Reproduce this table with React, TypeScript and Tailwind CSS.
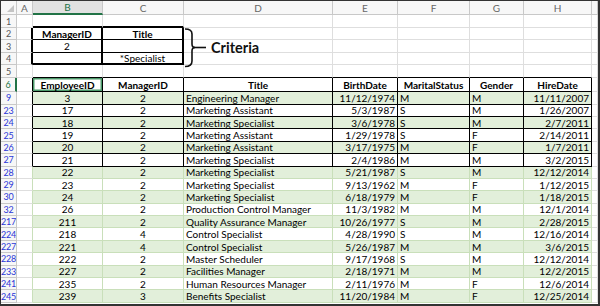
import React from 'react';

// grid template: row header, A..I
const COLS = 'grid grid-cols-[16px_16px_70px_81px_149px_65px_72px_54px_68px_1fr]';
const LETTERS = ['A', 'B', 'C', 'D', 'E', 'F', 'G', 'H', ''];
const GL = 'border-r border-b border-[#dedede]';

const data = [
  ['9', '3', '2', 'Engineering Manager', '11/12/1974', 'M', 'M', '11/11/2007'],
  ['23', '17', '2', 'Marketing Assistant', '5/3/1987', 'S', 'M', '1/26/2007'],
  ['24', '18', '2', 'Marketing Specialist', '3/6/1978', 'S', 'M', '2/7/2011'],
  ['25', '19', '2', 'Marketing Assistant', '1/29/1978', 'S', 'F', '2/14/2011'],
  ['26', '20', '2', 'Marketing Assistant', '3/17/1975', 'M', 'F', '1/7/2011'],
  ['27', '21', '2', 'Marketing Specialist', '2/4/1986', 'M', 'M', '3/2/2015'],
  ['28', '22', '2', 'Marketing Specialist', '5/21/1987', 'S', 'M', '12/12/2014'],
  ['29', '23', '2', 'Marketing Specialist', '9/13/1962', 'M', 'F', '1/12/2015'],
  ['30', '24', '2', 'Marketing Specialist', '6/18/1979', 'M', 'F', '1/18/2015'],
  ['32', '26', '2', 'Production Control Manager', '11/3/1982', 'M', 'M', '12/1/2014'],
  ['217', '211', '2', 'Quality Assurance Manager', '10/26/1977', 'S', 'M', '2/28/2015'],
  ['224', '218', '4', 'Control Specialist', '4/28/1990', 'S', 'M', '12/16/2014'],
  ['227', '221', '4', 'Control Specialist', '5/26/1987', 'M', 'M', '3/6/2015'],
  ['228', '222', '2', 'Master Scheduler', '9/17/1968', 'S', 'M', '12/12/2014'],
  ['233', '227', '2', 'Facilities Manager', '2/18/1971', 'M', 'M', '12/2/2015'],
  ['241', '235', '2', 'Human Resources Manager', '2/11/1976', 'M', 'F', '12/6/2014'],
  ['245', '239', '3', 'Benefits Specialist', '11/20/1984', 'M', 'F', '12/25/2014'],
];

const headers = ['EmployeeID', 'ManagerID', 'Title', 'BirthDate', 'MaritalStatus', 'Gender', 'HireDate'];
// alignment of the B..H columns in the data rows
const align = ['justify-center', 'justify-center', 'justify-start', 'justify-end', 'justify-start', 'justify-start', 'justify-end'];

const RowNum = ({ n, cls = 'text-[#555]' }: { n: string; cls?: string }) => (
  <div className={`flex items-center justify-center overflow-hidden text-[9px] tracking-[-0.2px] border-r border-b border-[#c8c8c8] bg-[#f7f7f7] ${cls}`}>{n}</div>
);

const Blank = ({ cls = GL }: { cls?: string }) => <div className={cls} />;

// top rows 1..5 (criteria block lives in B2:C4)
const TopRow = ({ n, h, b, c }: { n: string; h: string; b: React.ReactNode[]; c: string[] }) => (
  <div className={`${COLS} ${h}`}>
    <RowNum n={n} />
    {c.map((cls, i) => (
      <div key={i} className={`flex items-center overflow-hidden ${cls}`}>{b[i]}</div>
    ))}
  </div>
);

export default function App() {
  const blk = 'border-black';

  return (
    <div className="relative w-[600px] h-[306px] overflow-hidden bg-white border-l border-t border-r-2 border-b-2 border-[#333] font-['Lato','Liberation_Sans',sans-serif] text-[10px] leading-none text-black">
      {/* column letters */}
      <div className={`${COLS} h-[14px]`}>
        <div className="relative border-r border-b border-[#c8c8c8] bg-[#f7f7f7]">
          <svg className="absolute right-[2px] bottom-[2px]" width="7" height="7" viewBox="0 0 7 7">
            <path d="M7 0 L7 7 L0 7 Z" fill="#c4c4c4" />
          </svg>
        </div>
        {LETTERS.map((l) => (
          <div
            key={l || 'I'}
            className={
              l === 'B'
                ? 'flex items-center justify-center border-r border-[#c8c8c8] border-b-2 border-b-[#217346] bg-[#e1e1e1] text-[#217346]'
                : 'flex items-center justify-center border-r border-b border-[#c8c8c8] bg-[#f7f7f7] text-[#666]'
            }
          >
            {l}
          </div>
        ))}
      </div>

      {/* row 1 */}
      <TopRow
        n="1"
        h="h-[13px]"
        b={[]}
        c={[GL, 'border-r border-[#dedede] border-b-2 border-b-black', 'border-r border-[#dedede] border-b-2 border-b-black', GL, GL, GL, GL, GL, GL]}
      />
      {/* rows 2..4 */}
      {[
        ['2', <span className="w-full text-center font-bold">ManagerID</span>, <span className="w-full text-center font-bold">Title</span>, 'border-b border-b-black'],
        ['3', <span className="w-full text-center">2</span>, null, 'border-b border-b-black'],
        ['4', null, <span className="w-full text-center">*Specialist</span>, 'border-b-2 border-b-black'],
      ].map(([n, bTxt, cTxt, bb]) => (
        <TopRow
          key={n as string}
          n={n as string}
          h="h-[12.4px]"
          b={[null, bTxt as React.ReactNode, cTxt as React.ReactNode]}
          c={[
            `border-r-2 ${blk} border-b border-b-[#dedede]`,
            `border-r-2 ${blk} ${bb}`,
            `border-r-2 ${blk} ${bb}`,
            'border-r border-[#dedede] border-b border-b-[#dedede]',
            GL,
            GL,
            GL,
            GL,
            GL,
          ]}
        />
      ))}
      {/* row 5 */}
      <TopRow
        n="5"
        h="h-[13px]"
        b={[]}
        c={[GL, ...Array(7).fill('border-r border-[#dedede] border-b border-b-black'), GL]}
      />

      {/* row 6 : table header */}
      <div className={`${COLS} h-[14px]`}>
        <RowNum n="6" cls="border-r-2 border-r-[#217346] bg-[#e1e1e1] text-[#217346]" />
        <Blank cls="border-r border-r-black border-b border-[#dedede]" />
        {headers.map((h, i) => (
          <div
            key={h}
            className={`flex items-center justify-center border-r border-b border-black font-bold ${i === 0 ? 'shadow-[inset_0_0_0_1.5px_#4c9a6b]' : ''}`}
          >
            {h}
          </div>
        ))}
        <Blank />
      </div>

      {/* data rows */}
      {data.map((r, ri) => {
        const dark = ri < 6;
        const line = dark ? 'border-black' : 'border-[#c9dfba]';
        const bg = ri % 2 === 0 ? 'bg-[#e2efda]' : 'bg-white';
        return (
          <div key={r[0]} className={`${COLS} h-[12.4px]`}>
            <RowNum n={r[0]} cls="text-[#2a36d8]" />
            <Blank cls={`border-r border-b border-[#dedede] ${dark ? 'border-r-black' : 'border-r-[#c9dfba]'}`} />
            {r.slice(1).map((v, ci) => (
              <div key={ci} className={`flex items-center px-[2px] whitespace-nowrap border-r border-b ${line} ${bg} ${align[ci]}`}>
                {v}
              </div>
            ))}
            <Blank />
          </div>
        );
      })}

      {/* floating brace + label over D2:D4 */}
      <div className="absolute left-[184px] top-[27px] flex items-center">
        <svg width="24" height="40" viewBox="0 0 24 40" fill="none" stroke="#111" strokeWidth="1.6">
          <path d="M0 1 Q7 1 7 6 L7 16 Q7 19.5 10 19.5 Q7 19.5 7 23 L7 33 Q7 38.5 0 38.5" />
          <path d="M9 19.5 L21 19.5" />
        </svg>
        <span className="ml-[2px] text-[14.5px] font-bold text-[#111]">Criteria</span>
      </div>
    </div>
  );
}
